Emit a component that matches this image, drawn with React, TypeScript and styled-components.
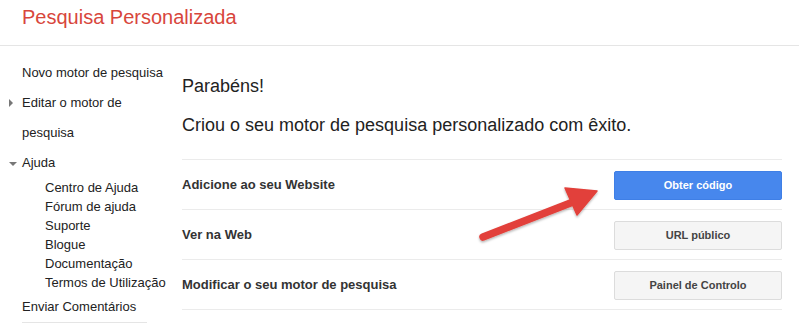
import React from 'react';
import styled, { createGlobalStyle } from 'styled-components';

const GlobalStyle = createGlobalStyle`
  html, body {
    margin: 0;
    padding: 0;
    background: #fff;
  }
  body {
    font-family: 'Liberation Sans', Arial, sans-serif;
    color: #222;
  }
`;

const Page = styled.div`
  position: relative;
  width: 799px;
  height: 326px;
  overflow: hidden;
`;

const Header = styled.header`
  height: 46px;
  border-bottom: 1px solid #e5e5e5;
  display: flex;
  align-items: center;
  padding-left: 22px;
  padding-bottom: 10px;
  box-sizing: border-box;
`;

const Title = styled.h1`
  margin: 0;
  font-size: 20px;
  font-weight: normal;
  color: #d8463c;
`;

const Body = styled.div`
  display: flex;
`;

const Sidebar = styled.nav`
  width: 160px;
  padding: 12px 0 0 22px;
  flex-shrink: 0;
  font-size: 13px;
  color: #222;
`;

const NavItem = styled.div`
  position: relative;
  line-height: 30px;
  width: 150px;
`;

const Caret = styled.span<{ open?: boolean }>`
  position: absolute;
  left: -13px;
  top: ${({ open }) => (open ? '14px' : '11px')};
  width: 0;
  height: 0;
  ${({ open }) =>
    open
      ? `border-left: 4px solid transparent;
         border-right: 4px solid transparent;
         border-top: 4px solid #777;`
      : `border-top: 4px solid transparent;
         border-bottom: 4px solid transparent;
         border-left: 4px solid #777;`}
`;

const SubList = styled.div`
  padding-left: 23px;
`;

const SubItem = styled.div`
  line-height: 19px;
`;

const SideDivider = styled.div`
  width: 125px;
  border-top: 1px solid #e5e5e5;
`;

const Main = styled.main`
  width: 600px;
  padding-top: 28px;
`;

const Heading = styled.div`
  font-size: 18px;
  line-height: 24px;
  color: #222;
`;

const Lead = styled(Heading)`
  margin-top: 15px;
  margin-bottom: 22px;
`;

const Row = styled.div`
  display: flex;
  align-items: center;
  justify-content: space-between;
  height: 50px;
  border-top: 1px solid #ebebeb;
  box-sizing: border-box;

  &:last-child {
    height: 51px;
    border-bottom: 1px solid #ebebeb;
  }
`;

const RowLabel = styled.div`
  font-size: 13px;
  font-weight: bold;
  color: #333;
`;

const Button = styled.button<{ primary?: boolean }>`
  width: 168px;
  height: 29px;
  margin-top: 1px;
  font-family: inherit;
  font-size: 11px;
  font-weight: bold;
  border-radius: 2px;
  cursor: pointer;
  color: ${({ primary }) => (primary ? '#fff' : '#444')};
  background: ${({ primary }) => (primary ? '#4787ed' : '#f5f5f5')};
  border: 1px solid ${({ primary }) => (primary ? '#3f7fe6' : '#dcdcdc')};
`;

const Arrow = styled.svg`
  position: absolute;
  left: 470px;
  top: 170px;
  overflow: visible;
`;

const rows = [
  { label: 'Adicione ao seu Website', action: 'Obter código', primary: true },
  { label: 'Ver na Web', action: 'URL público' },
  { label: 'Modificar o seu motor de pesquisa', action: 'Painel de Controlo' },
];

const help = [
  'Centro de Ajuda',
  'Fórum de ajuda',
  'Suporte',
  'Blogue',
  'Documentação',
  'Termos de Utilização',
];

export default function App() {
  return (
    <Page>
      <GlobalStyle />
      <Header>
        <Title>Pesquisa Personalizada</Title>
      </Header>
      <Body>
        <Sidebar>
          <NavItem>Novo motor de pesquisa</NavItem>
          <NavItem>
            <Caret />
            Editar o motor de pesquisa
          </NavItem>
          <NavItem>
            <Caret open />
            Ajuda
          </NavItem>
          <SubList>
            {help.map(h => (
              <SubItem key={h}>{h}</SubItem>
            ))}
          </SubList>
          <NavItem>Enviar Comentários</NavItem>
          <SideDivider />
        </Sidebar>
        <Main>
          <Heading>Parabéns!</Heading>
          <Lead>Criou o seu motor de pesquisa personalizado com êxito.</Lead>
          {rows.map(r => (
            <Row key={r.label}>
              <RowLabel>{r.label}</RowLabel>
              <Button primary={r.primary}>{r.action}</Button>
            </Row>
          ))}
        </Main>
      </Body>
      <Arrow width="140" height="75" viewBox="0 0 140 75">
        <defs>
          <filter id="sh" x="-20%" y="-20%" width="140%" height="160%">
            <feDropShadow dx="0" dy="1.5" stdDeviation="1.2" floodColor="#000" floodOpacity="0.3" />
          </filter>
        </defs>
        <g filter="url(#sh)" fill="#e2403a" stroke="#e2403a">
          <line x1="13" y1="67" x2="103" y2="32" strokeWidth="7.5" strokeLinecap="round" />
          <polygon points="95,18 127,21 107,45" strokeWidth="1.5" strokeLinejoin="round" />
        </g>
      </Arrow>
    </Page>
  );
}
